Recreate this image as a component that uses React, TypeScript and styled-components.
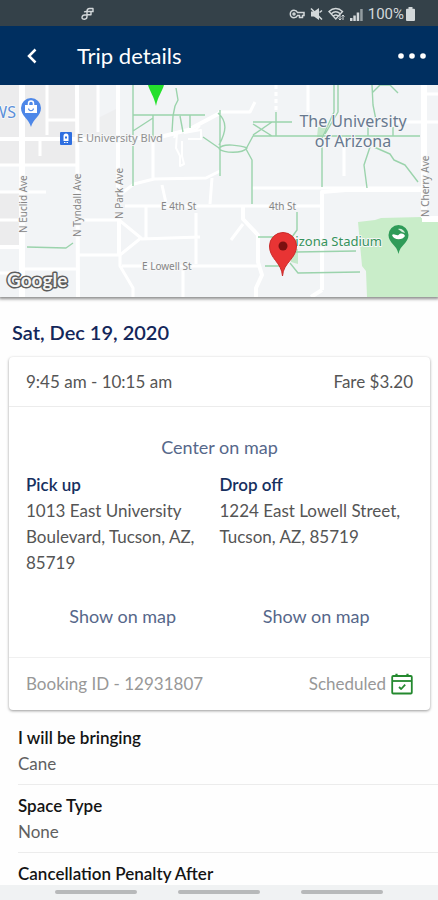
import React from "react";
import styled, { createGlobalStyle } from "styled-components";

const GlobalStyle = createGlobalStyle`
  *, *::before, *::after { box-sizing: border-box; }
  body { margin: 0; background: #fff; }
  body, button { font-family: Lato, "Open Sans", sans-serif; }
  h1, h2, h3, p, dl, dt, dd { margin: 0; }
`;

const Screen = styled.div`
  display: flex;
  flex-direction: column;
  height: 100vh;
  background: #fefefe;
  color: #555;
`;

const StatusBar = styled.div`
  display: flex;
  flex: none;
  align-items: center;
  justify-content: space-between;
  height: 26px;
  padding: 2px 23px 0 80px;
  background: #344149;
  color: #d3d8da;
`;

const StatusIcons = styled.div`
  display: flex;
  align-items: center;
  gap: 5px;
`;

const Battery = styled.span`
  display: flex;
  align-items: center;
  gap: 2px;
  font: 15px/20px Roboto, sans-serif;
`;

const AppBar = styled.header`
  display: flex;
  flex: none;
  align-items: center;
  height: 59px;
  padding: 0 8px 0 20px;
  background: #002f60;
  color: #fff;
`;

const IconButton = styled.button`
  display: flex;
  align-items: center;
  justify-content: center;
  padding: 4px;
  border: 0;
  background: none;
  color: inherit;
  cursor: pointer;
`;

const Title = styled.h1`
  flex: 1;
  padding-left: 33px;
  font-size: 22px;
  font-weight: 400;
  line-height: 28px;
`;

const Content = styled.main`
  flex: 1;
  min-height: 0;
  overflow-y: auto;
  scrollbar-width: none;
`;

const MapPanel = styled.section`
  height: 212px;
  overflow: hidden;
  box-shadow: 0 1px 3px 1px rgba(0, 0, 0, 0.45);

  svg {
    display: block;
    width: 100%;
    height: 100%;
  }
`;

const DateHeading = styled.h2`
  padding: 21px 12px 11px;
  color: #14275a;
  font-size: 20px;
  font-weight: 600;
  line-height: 28px;
`;

const Card = styled.article`
  margin: 0 8px 0 9px;
  border-radius: 4px;
  background: #fff;
  box-shadow: 0 1px 3px rgba(0, 0, 0, 0.4);
`;

const CardRow = styled.div<{ $muted?: boolean }>`
  display: flex;
  align-items: center;
  justify-content: space-between;
  height: ${(p) => (p.$muted ? 52 : 49)}px;
  padding: 0 17px;
  color: ${(p) => (p.$muted ? "#989898" : "#555")};
  font-size: 17px;
  line-height: 26px;
`;

const Status = styled.span`
  display: flex;
  align-items: center;
  gap: 5px;
`;

const CardBody = styled.div`
  display: flex;
  flex-direction: column;
  align-items: stretch;
  padding: 27px 17px 28px;
  border-top: 1px solid #ececec;
  border-bottom: 1px solid #f0f0f0;
`;

const MapLink = styled.button`
  align-self: center;
  padding: 0;
  border: 0;
  background: none;
  color: #56678a;
  font-size: 18px;
  line-height: 26px;
  cursor: pointer;
`;

const Stops = styled.div`
  display: grid;
  grid-template-columns: 1fr 1fr;
  margin-top: 12px;
`;

const Stop = styled.section`
  display: flex;
  flex-direction: column;
  justify-content: space-between;
  gap: 27px;
`;

const StopName = styled.h3`
  color: #17305f;
  font-size: 17px;
  font-weight: 600;
  line-height: 26px;
`;

const Address = styled.p`
  font-size: 17px;
  line-height: 26px;
`;

const Details = styled.dl`
  padding: 15px 0 0 18px;
`;

const Detail = styled.div`
  height: 60px;
  margin-bottom: 8px;
  border-bottom: 1px solid #ececec;

  &:last-child {
    height: 26px;
    margin: 0;
    border: 0;
  }
`;

const DetailName = styled.dt`
  color: #141414;
  font-size: 17px;
  font-weight: 600;
  line-height: 26px;
`;

const DetailValue = styled.dd`
  color: #606060;
  font-size: 17px;
  line-height: 26px;
`;

const NavBar = styled.nav`
  display: flex;
  flex: none;
  justify-content: center;
  gap: 41px;
  height: 15px;
  padding-top: 5px;
  background: #f0f2f3;
`;

const NavPill = styled.button`
  width: 82px;
  height: 4px;
  padding: 0;
  border: 0;
  border-radius: 2px;
  background: #b7b9ba;
`;

function AppGlyph() {
  return (
    <svg width="16" height="16" viewBox="0 0 16 16" fill="none" stroke="currentColor" strokeWidth="1.4" strokeLinecap="round" aria-hidden="true">
      <path d="M13 2.500H9.500C7.500 2.500 7 3.500 7 5.500V10.500c0 3.500-5 3.500-5 1 0-2 2-2.700 4.500-2.700H11M4.500 5.800C5.500 5.300 6 5.500 7 5.500h6V3M11 5.500v3.300" />
    </svg>
  );
}

function KeyIcon() {
  return (
    <svg width="16" height="12" viewBox="0 0 16 12" fill="none" stroke="currentColor" strokeWidth="1.5" aria-hidden="true">
      <path d="M8.500 4.500C7.800 3 6.500 2.300 5 2.300a3.700 3.700 0 0 0 0 7.400c1.500 0 2.800-.7 3.500-2.200h2v2h3v-2h1.500v-3z" />
      <circle cx="5" cy="6" r="1" />
    </svg>
  );
}

function MuteIcon() {
  return (
    <svg width="13" height="14" viewBox="0 0 13 14" aria-hidden="true">
      <path d="M1 4.500h3L9 1v12L4 9.500H1z" fill="currentColor" />
      <path d="M1 1.500l11 11M9.500 5.500l2.500-2" stroke="currentColor" strokeWidth="1.600" />
    </svg>
  );
}

function WifiIcon() {
  return (
    <svg width="17" height="14" viewBox="0 0 17 14" fill="none" stroke="currentColor" strokeWidth="1.4" aria-hidden="true">
      <path d="M1 4.500c4-4 9.500-4 13.500 0L7.800 12zM3.300 6.800c2.700-2.500 6.200-2.500 9 0M5.400 9c1.500-1.300 3.300-1.300 4.800 0" />
      <path d="M12 8v5m-1.500-1.500L12 13l1.500-1.500M15 13V8m-1.500 1.500L15 8l1.500 1.500" strokeWidth="1" />
    </svg>
  );
}

function SignalIcon() {
  return (
    <svg width="13" height="13" viewBox="0 0 13 13" fill="currentColor" aria-hidden="true">
      <path d="M0 10h2.500v3H0zM3.300 7.500h2.500V13H3.300zM6.700 4.500h2.500V13H6.700z" />
      <path d="M10.200 1h2.500v12h-2.500z" opacity=".6" />
    </svg>
  );
}

function BatteryIcon() {
  return (
    <svg width="9" height="14" viewBox="0 0 9 14" fill="currentColor" aria-hidden="true">
      <path d="M2.500 0h4v1.800H8a1 1 0 0 1 1 1V13a1 1 0 0 1-1 1H1a1 1 0 0 1-1-1V2.800a1 1 0 0 1 1-1h1.500z" />
    </svg>
  );
}

function CalendarIcon() {
  return (
    <svg width="22" height="22" viewBox="0 0 22 22" fill="none" stroke="#24892f" strokeWidth="1.800" strokeLinejoin="round" aria-hidden="true">
      <rect x="1.200" y="3" width="19.600" height="17.500" rx="1" />
      <path d="M1.200 8h19.600" />
      <path d="M5.500 .8v3M16.500 .8v3" strokeWidth="2.200" />
      <path d="M8 14l2.200 2 4-4.300" />
    </svg>
  );
}

const roads = [
  { w: 6, d: "M22 85V297M424 85V218M422 219H438" },
  { w: 4, d: "M77 85L78 297M118 85V204M119 219V256M0 139H118L160 137L188 130L220 113M322 290V192L346 190H422M322 290L311 297M243 207V219L258 235V262L262 275L256 288V297M0 247H22" },
  { w: 3, d: "M78 255H120L141 238L119 220H78M47 85V135M47 120H77M98 85V132M40 140V156M0 165H78M0 192H46M0 220H22M25 269H76M0 273H12M125 206H322M120 256V266L133 288V297M141 239L200 237M146 207V238M196 213V264M122 266H258M183 270V297M118 196L134 184L154 179L206 178L220 171M153 140V179M162 185L166 203M212 178L210 204M218 112H250L255 102M243 224L231 240M424 94H438M395 122H438M344 135V176M308 85V112M252 188H424" },
  { w: 2, d: "M174 138C178 125 190 137 200 126M177 133L176 148L180 156V166L184 164L182 156V141M188 139H201V130L184 133" },
];

const paths =
  "M133 85V186M133 115H205M133 131L153 118M153 115V138M176 88L178 100L175 106L173 116L172 132M180 116L183 132M190 115V128M203 137L219 148M220 110V176M218 113C228 122 226 132 219 145M219 149C222 142 242 146 247 148C242 154 224 153 219 149M246 149L253 136H420M253 122H292M253 124L272 136M253 135L272 122M276 112V136M246 149L252 160V204M334 85V112L322 138V187M338 85V112L325 134M372 85L373 105L377 125M372 93L380 85H390L398 93M368 122V136M393 127V136M370 147L364 165L367 188M374 147L390 154L394 160L405 165L418 182M297 212V230L292 237M258 237H276M265 266H280M290 263L298 273L360 272M296 252L356 251M27 247L66 248L73 243";

const streets = [
  { text: "N Euclid Ave", x: 27, y: 233 },
  { text: "N Tyndall Ave", x: 81, y: 237 },
  { text: "N Park Ave", x: 123, y: 219 },
  { text: "N Cherry Ave", x: 429, y: 217 },
];

const MapText = styled.text<{ $size: number; $color: string }>`
  font-family: "Noto Sans", sans-serif;
  font-size: ${(p) => p.$size}px;
  fill: ${(p) => p.$color};
  paint-order: stroke;
  stroke: #f6f7f8;
  stroke-width: 2px;
  stroke-linejoin: round;
`;

const GoogleMark = styled.text`
  font-family: Lato, sans-serif;
  font-size: 19px;
  font-weight: 700;
  fill: #f4f4f4;
  paint-order: stroke;
  stroke: #5c5c5c;
  stroke-width: 3px;
  stroke-linejoin: round;
`;

function CampusMap() {
  return (
    <svg viewBox="0 85 438 212" preserveAspectRatio="xMidYMid slice" role="img" aria-label="Map of the trip">
      <rect x="-600" y="0" width="1700" height="400" fill="#f2f4f6" />
      <path d="M0 85H78V165H0zM0 192H22V247H0z" fill="#ececed" />
      <path d="M78 85H98V139H78zM98 118L118 108V139H98z" fill="#eeeff0" />
      <path d="M358 222L375 220L381 218L422 217L438 221V297H367L366 271L362 266z" fill="#c9edc9" />
      <path d="M291 249H298V264L291 262zM318 127H326L322 137H317z" fill="#c5e8ca" />
      {roads.map((r) => (
        <path key={r.d} d={r.d} fill="none" stroke="#fff" strokeWidth={r.w} strokeLinejoin="round" />
      ))}
      <path d="M276 85V112" stroke="#fff" strokeWidth="3" strokeDasharray="4 3" />
      <path d={paths} fill="none" stroke="#9bd3ac" strokeWidth="1.400" strokeLinejoin="round" />

      {streets.map((s) => (
        <MapText key={s.text} $size={10} $color="#858585" transform={`translate(${s.x} ${s.y}) rotate(-90)`}>
          {s.text}
        </MapText>
      ))}
      <MapText $size={11} $color="#8f9091" x="77" y="142">E University Blvd</MapText>
      <MapText $size={10} $color="#858585" x="161" y="210">E 4th St</MapText>
      <MapText $size={10} $color="#858585" x="269" y="210">4th St</MapText>
      <MapText $size={10} $color="#858585" x="142" y="270">E Lowell St</MapText>
      <MapText $size={16} $color="#5b8fd8" x="16" y="118" textAnchor="end">WS</MapText>
      <MapText $size={16} $color="#68798f" x="353" y="127" textAnchor="middle">The University</MapText>
      <MapText $size={16} $color="#68798f" x="353" y="147" textAnchor="middle">of Arizona</MapText>
      <MapText $size={13} $color="#35925c" x="382" y="246" textAnchor="end">Arizona Stadium</MapText>

      <path d="M31 127C29 119 21 116 21 108a10 10 0 0 1 20 0c0 8-8 11-10 19z" fill="#4d87e8" />
      <path d="M25 105h12v8H25z" fill="#fff" />
      <path d="M28.500 105v-1.500a2.500 2.500 0 0 1 5 0V105" fill="none" stroke="#fff" strokeWidth="1.500" />
      <path d="M28.500 108.500c.5 3 4.500 3 5 0" fill="none" stroke="#4d87e8" strokeWidth="1.200" />
      <rect x="60" y="132" width="12" height="13" rx="1" fill="#2f6fe0" />
      <path d="M63.500 136a2.500 2.500 0 0 1 5 0v5h-5zM64 142h1.500v1H64zM66.500 142H68v1h-1.500z" fill="#fff" />
      <path d="M65 136.500h2v2h-2z" fill="#2f6fe0" />
      <path d="M148 85H164C162 92 158 96 156 106C154 96 150 92 148 85z" fill="#25e02c" />
      <path d="M398.500 254C397 245 388.500 243 388.500 235a10 10 0 0 1 20 0c0 8-8.500 10-10 19z" fill="#2f9b58" />
      <path d="M392 235c2-2 4 1 6.500 0 2-2 5-2 6.500 1-2 4-11 5-13-1z" fill="#fff" />
      <path d="M398 229c3-1 6 1 7 4l-3-1z" fill="#d5efd9" />
      <path d="M282.500 276C281.500 262 269.500 259 269.500 246a13.500 13.500 0 0 1 27 0c0 13-13 16-14 30z" fill="#e83434" stroke="#c92a2a" strokeWidth="1" />
      <circle cx="283" cy="246" r="4.500" fill="#7b1010" />
      <GoogleMark x="7" y="287">Google</GoogleMark>
    </svg>
  );
}

const stops = [
  { name: "Pick up", address: "1013 East University Boulevard, Tucson, AZ, 85719" },
  { name: "Drop off", address: "1224 East Lowell Street, Tucson, AZ, 85719" },
];

const details = [
  { name: "I will be bringing", value: "Cane" },
  { name: "Space Type", value: "None" },
  { name: "Cancellation Penalty After" },
];

export default function App() {
  return (
    <Screen>
      <GlobalStyle />
      <StatusBar>
        <AppGlyph />
        <StatusIcons>
          <KeyIcon />
          <MuteIcon />
          <WifiIcon />
          <SignalIcon />
          <Battery>
            100%
            <BatteryIcon />
          </Battery>
        </StatusIcons>
      </StatusBar>
      <AppBar>
        <IconButton aria-label="Back">
          <svg width="16" height="16" viewBox="0 0 16 16" fill="none" stroke="currentColor" strokeWidth="2.500">
            <path d="M11.500 1.500L5 8l6.500 6.500" />
          </svg>
        </IconButton>
        <Title>Trip details</Title>
        <IconButton aria-label="More options">
          <svg width="28" height="6" viewBox="0 0 28 6" fill="currentColor">
            <circle cx="3" cy="3" r="2.800" />
            <circle cx="14" cy="3" r="2.800" />
            <circle cx="25" cy="3" r="2.800" />
          </svg>
        </IconButton>
      </AppBar>
      <Content>
        <MapPanel>
          <CampusMap />
        </MapPanel>
        <DateHeading>Sat, Dec 19, 2020</DateHeading>
        <Card>
          <CardRow>
            <span>9:45 am - 10:15 am</span>
            <span>Fare $3.20</span>
          </CardRow>
          <CardBody>
            <MapLink>Center on map</MapLink>
            <Stops>
              {stops.map((s) => (
                <Stop key={s.name}>
                  <div>
                    <StopName>{s.name}</StopName>
                    <Address>{s.address}</Address>
                  </div>
                  <MapLink>Show on map</MapLink>
                </Stop>
              ))}
            </Stops>
          </CardBody>
          <CardRow $muted>
            <span>Booking ID - 12931807</span>
            <Status>
              Scheduled
              <CalendarIcon />
            </Status>
          </CardRow>
        </Card>
        <Details>
          {details.map((d) => (
            <Detail key={d.name}>
              <DetailName>{d.name}</DetailName>
              {d.value && <DetailValue>{d.value}</DetailValue>}
            </Detail>
          ))}
        </Details>
      </Content>
      <NavBar aria-label="System navigation">
        <NavPill aria-label="Recent apps" />
        <NavPill aria-label="Home" />
        <NavPill aria-label="Back to previous app" />
      </NavBar>
    </Screen>
  );
}
